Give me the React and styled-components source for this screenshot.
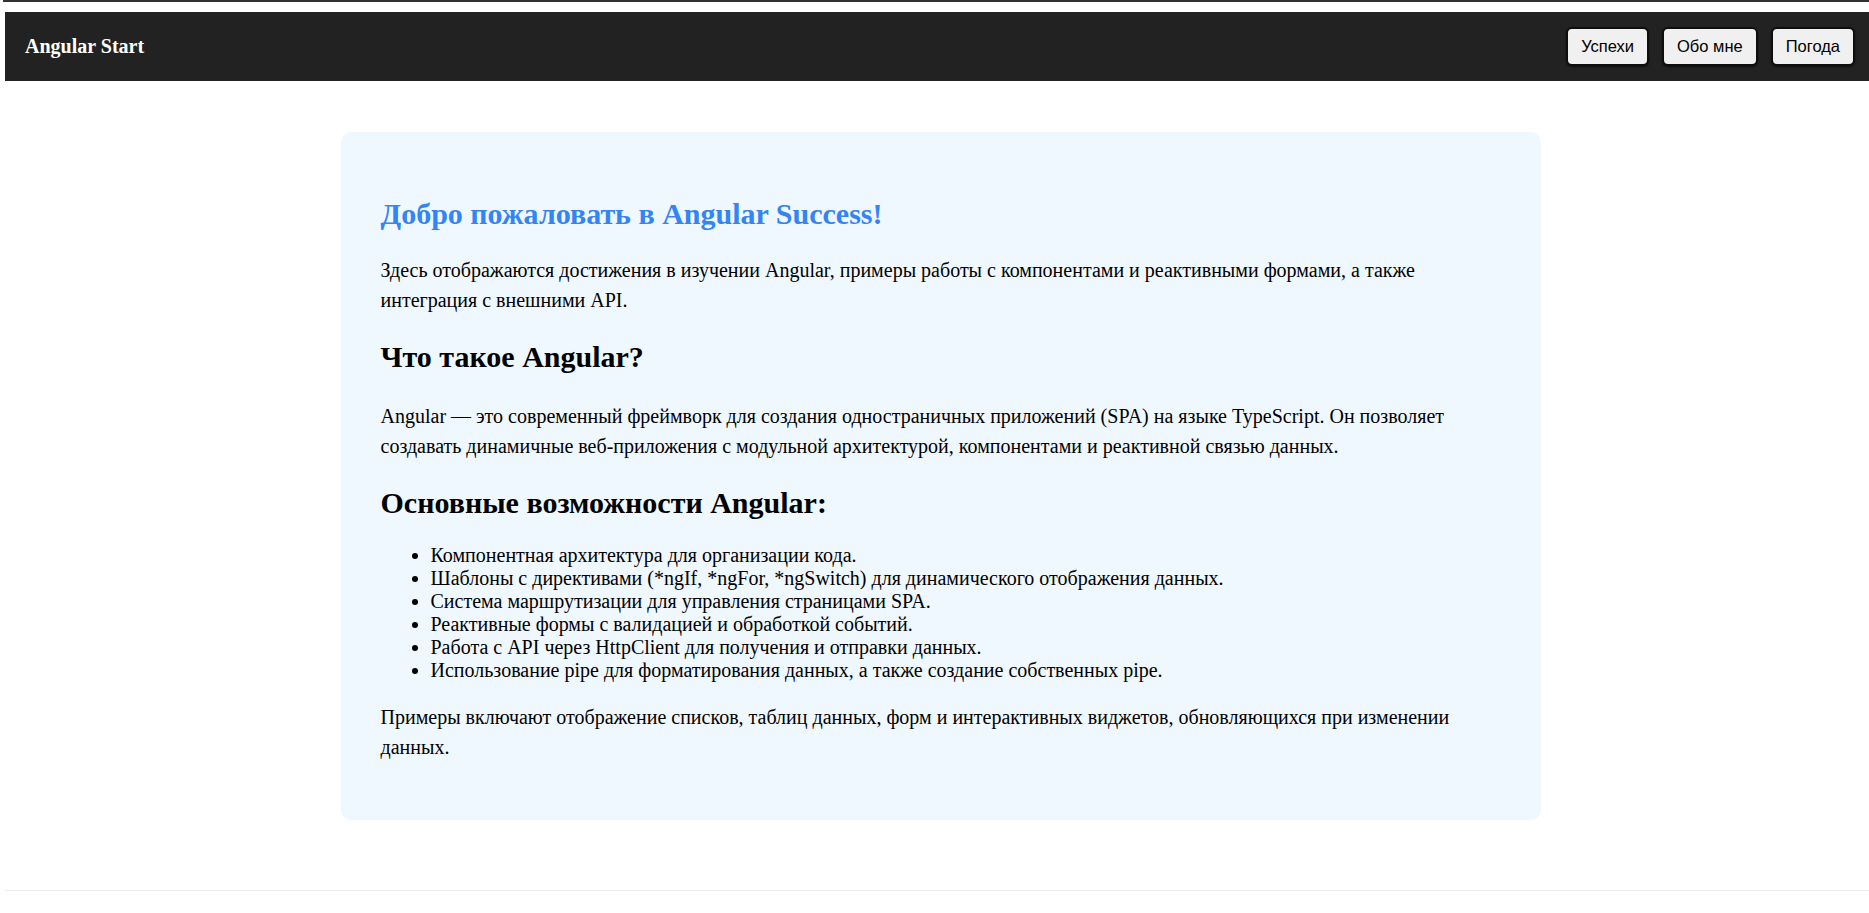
import React from 'react'
import styled, { createGlobalStyle } from 'styled-components'

const GlobalStyle = createGlobalStyle`
  html, body {
    margin: 0;
    padding: 0;
    background: #ffffff;
    font-family: "Liberation Serif", "Times New Roman", serif;
    color: #000;
  }
`

const TopEdge = styled.div`
  height: 2px;
  margin-left: 3px;
  background-color: #333333;
`

const Page = styled.div`
  margin-left: 5px;
  padding-top: 10px;
`

const Header = styled.header`
  display: flex;
  align-items: center;
  justify-content: space-between;
  height: 69px;
  padding: 0 14px 0 20px;
  background-color: #222222;
`

const Brand = styled.div`
  color: #ffffff;
  font-size: 20px;
  font-weight: bold;
`

const Nav = styled.nav`
  display: flex;
  gap: 13px;
`

const NavButton = styled.button`
  box-sizing: border-box;
  height: 39px;
  padding: 0 13px;
  font-family: "Liberation Sans", Arial, sans-serif;
  font-size: 16.5px;
  color: #000;
  background-color: #f0f0f0;
  border: 2px solid #0e0e0e;
  border-radius: 6px;
  box-shadow: 0 1px 2px rgba(0, 0, 0, 0.6);
  cursor: pointer;
`

const Main = styled.main`
  display: flex;
  justify-content: center;
  padding: 51px 0 70px 7px;
`

const Card = styled.section`
  box-sizing: border-box;
  width: 1200px;
  padding: 40px 40px 38px;
  background-color: #eff7ff;
  border-radius: 10px;
`

const Title = styled.h2`
  margin: 25px 0 24px;
  font-size: 30px;
  font-weight: bold;
  color: ${p => p.$accent ? '#3384f5' : '#000'};
`

const Text = styled.p`
  margin: ${p => p.$spaced ? '27px' : '20px'} 0 20px;
  font-size: 20px;
  line-height: 1.5;
`

const List = styled.ul`
  margin: 20px 0 20px;
  padding-left: 50px;
  font-size: 20px;
  line-height: 23px;
`

const Footer = styled.footer`
  border-top: 1px solid #ececec;
  height: 22px;
`

const features = [
  'Компонентная архитектура для организации кода.',
  'Шаблоны с директивами (*ngIf, *ngFor, *ngSwitch) для динамического отображения данных.',
  'Система маршрутизации для управления страницами SPA.',
  'Реактивные формы с валидацией и обработкой событий.',
  'Работа с API через HttpClient для получения и отправки данных.',
  'Использование pipe для форматирования данных, а также создание собственных pipe.'
]

export default function App () {
  return (
    <>
      <GlobalStyle />
      <TopEdge />
      <Page>
        <Header>
          <Brand>Angular Start</Brand>
          <Nav>
            <NavButton>Успехи</NavButton>
            <NavButton>Обо мне</NavButton>
            <NavButton>Погода</NavButton>
          </Nav>
        </Header>
        <Main>
          <Card>
            <Title $accent>Добро пожаловать в Angular Success!</Title>
            <Text>
              Здесь отображаются достижения в изучении Angular, примеры работы с компонентами и реактивными формами, а также интеграция с внешними API.
            </Text>
            <Title>Что такое Angular?</Title>
            <Text $spaced>
              Angular — это современный фреймворк для создания одностраничных приложений (SPA) на языке TypeScript. Он позволяет создавать динамичные веб-приложения с модульной архитектурой, компонентами и реактивной связью данных.
            </Text>
            <Title>Основные возможности Angular:</Title>
            <List>
              {features.map(f => <li key={f}>{f}</li>)}
            </List>
            <Text>
              Примеры включают отображение списков, таблиц данных, форм и интерактивных виджетов, обновляющихся при изменении данных.
            </Text>
          </Card>
        </Main>
        <Footer />
      </Page>
    </>
  )
}
